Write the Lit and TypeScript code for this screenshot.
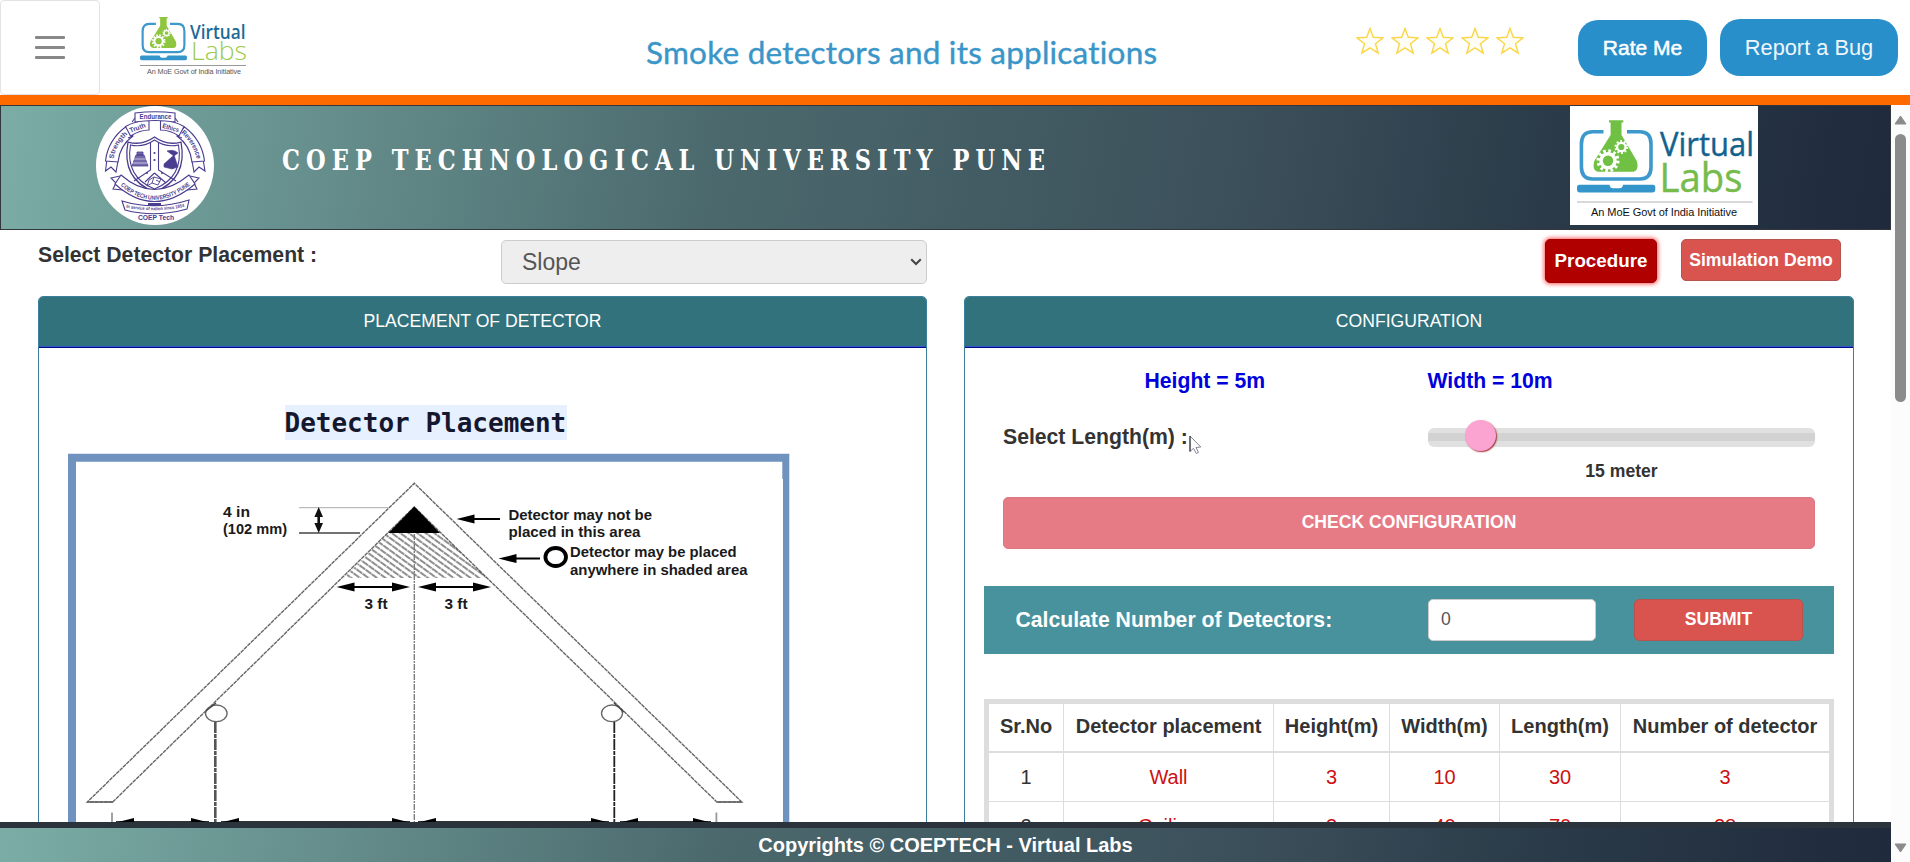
import { LitElement, html, css, svg } from "lit";
import { customElement, property } from "lit/decorators.js";

/** Toothed wheel outline centred on (cx, cy). */
const gear = (cx: number, cy: number, r: number, teeth: number, hole: string) => {
  const circ = 2 * Math.PI * r;
  const step = circ / (teeth * 2);
  return svg`
    <circle cx=${cx} cy=${cy} r=${r * 0.93} fill="none" stroke="#fff" stroke-width=${r * 0.36} stroke-dasharray=${`${step * 0.93} ${step * 0.93}`}></circle>
    <circle cx=${cx} cy=${cy} r=${r * 0.84} fill="#fff"></circle>
    <circle cx=${cx} cy=${cy} r=${r * 0.5} fill=${hole}></circle>`;
};

/** Laptop with a conical flask, shared by both logos. */
const laptop = (green: string) => svg`
  <path d="M33.500 25.800H22.500Q11.400 25.800 11.400 38V61Q11.400 73 22.500 73H70Q81 73 81 61V38Q81 25.800 70 25.800H57" fill="none" stroke="#3d98cb" stroke-width="3.600"></path>
  <path d="M9.500 78.700H39.500Q40 82.200 43 82.200H49.500Q52.500 82.200 53 78.700H83Q85.300 78.700 85.300 81.500V83.500Q85.300 86.500 82.500 86.500H10Q7 86.500 7 83.500V81.500Q7 78.700 9.500 78.700Z" fill="#3495cb"></path>
  <path d="M39 14.300H53.300V16.500H51.500V29L66.800 55Q69.500 65.800 62 65.800H29.500Q21.500 65.800 24.300 55L40.600 29V16.500H39Z" fill=${green}></path>
  ${gear(38, 54.7, 10.4, 12, green)}
  ${gear(51.3, 41, 6.2, 10, green)}`;

@customElement("lab-logo")
class LabLogo extends LitElement {
  @property() variant = "small";
  static styles = css`
    :host { display: block; }
    svg { display: block; }
    .small { font-family: "Open Sans", sans-serif; }
    .cap { font-family: "Liberation Sans", Arial, sans-serif; }
  `;
  render() {
    return this.variant === "small"
      ? html`<svg class="small" width="107" height="60" viewBox="0 0 107 60">
          <g transform="translate(-4.2 -8.6) scale(.6)">${laptop("#8fc63f")}</g>
          <text x="50" y="21.800" font-size="20" font-weight="600" fill="#1c6a97" textLength="55.500" lengthAdjust="spacingAndGlyphs">Virtual</text>
          <text x="51" y="43" font-size="25.500" font-weight="300" fill="#9bcb4b" textLength="56" lengthAdjust="spacingAndGlyphs">Labs</text>
          <path d="M0 48.500H106" stroke="#999" stroke-width="1"></path>
          <text class="cap" x="7" y="57" font-size="7.200" fill="#555" textLength="94">An MoE Govt of India Initiative</text>
        </svg>`
      : html`<svg class="small" width="188" height="119" viewBox="0 0 188 119">
          <rect width="188" height="119" fill="#fff"></rect>
          ${laptop("#70c044")}
          <text x="90" y="49.600" font-size="33" fill="#13628e" stroke="#13628e" stroke-width=".4" textLength="94" lengthAdjust="spacingAndGlyphs">Virtual</text>
          <text x="89.500" y="86" font-size="41" fill="#76bb4c" stroke="#76bb4c" stroke-width=".4" textLength="83" lengthAdjust="spacingAndGlyphs">Labs</text>
          <path d="M7 96H182.500" stroke="#ccc" stroke-width="1.500"></path>
          <text class="cap" x="21" y="109.700" font-size="11" fill="#111" textLength="146">An MoE Govt of India Initiative</text>
        </svg>`;
  }
}

@customElement("college-seal")
class CollegeSeal extends LitElement {
  static styles = css`
    :host { display: block; }
    svg { display: block; font-family: "Liberation Sans Narrow", "Liberation Sans", Arial, sans-serif; font-weight: bold; }
  `;
  render() {
    return html`<svg width="118" height="119" viewBox="0 0 118 119" fill="none" stroke="#4a3d8f" stroke-width="1.100">
      <ellipse cx="59" cy="59.500" rx="59" ry="59.500" fill="#fff" stroke="none"></ellipse>
      <defs>
        <path id="sl" d="M17.500 53Q20 37 34.500 26"></path>
        <path id="sr" d="M85 27Q97 37 101 54"></path>
        <path id="ut" d="M24.500 79.500Q58 108.500 95 78.500"></path>
        <path id="lt" d="M30 101.500Q58 107.500 90 100.500"></path>
      </defs>
      <path d="M11 53L9.500 65L15 61L20 66L22 55M107 53L109 65L103 61L98 66L96 55"></path>
      <path d="M9.500 55Q12 34 29.500 21L37 30Q24 39 22 56ZM108.500 55Q106 34 88.500 21L81 30Q94 39 96 56Z" fill="#fff"></path>
      <path d="M37 30L32 32M81 30L86 32M39 12L36 16M79 12L82 16"></path>
      <path d="M29.500 20.500Q40 14.500 53 14.500V24Q44 24 34.500 30ZM64.500 14.500Q78 14.500 88 20.500L83 30Q74 24 64.500 24Z" fill="#fff"></path>
      <path d="M39 7Q59 4.500 79 7V16Q59 13 39 16Z" fill="#fff"></path>
      <path d="M32 36Q46 40 58.500 31Q71 40 85 36Q92 73 58.500 86Q25 73 32 36Z" fill="#fff" stroke-width="1.300"></path>
      <path d="M34.500 39Q47 42 58.500 34Q70 42 82.500 39Q88 71 58.500 83Q29 71 34.500 39Z"></path>
      <path d="M54.500 37V64L38 75M62.500 37V64L80 75M58.500 67L49 76M58.500 67L70 77"></path>
      <path d="M40 49H48L52 60H36ZM41 49V46H47V49Z" fill="#7468aa" stroke-width=".8"></path>
      <path d="M37 53H51M36 57H52" stroke="#fff" stroke-width=".6"></path>
      <path d="M71 45Q78 43 82 47L78 50ZM68 58L78 49L82 61L76 63L68 61Z" fill="#4a3d8f" stroke-width=".6"></path>
      <path d="M53 74L58 71L65 73L62 79L56 77L51 80ZM58 71L56 77M60 74L64 76" stroke-width=".9"></path>
      <g fill="#4a3d8f" stroke="none"><circle cx="58.500" cy="47" r="1.100"></circle><circle cx="58.500" cy="54" r="1.100"></circle><circle cx="51" cy="67" r="1"></circle><circle cx="66" cy="67" r="1"></circle></g>
      <path d="M24 70L15 72L20 77L17 83L27 84M94 70L103 72L98 77L101 83L91 84"></path>
      <path d="M25 69Q58 98 93 69L99 78Q58 113 19 78Z" fill="#fff"></path>
      <path d="M26 95Q59 105 93 94L91 103Q59 112 29 104Z" fill="#fff"></path>
      <g fill="#4a3d8f" stroke="none">
        <text x="43.500" y="13" font-size="7" textLength="32" lengthAdjust="spacingAndGlyphs">Endurance</text>
        <text font-size="6.800" x="34.500" y="26.800" transform="rotate(-20 34.500 26.800)" textLength="16.500" lengthAdjust="spacingAndGlyphs">Truth</text>
        <text font-size="6.800" x="66" y="21.800" transform="rotate(16 66 21.800)" textLength="17" lengthAdjust="spacingAndGlyphs">Ethics</text>
        <text font-size="6.800"><textPath href="#sl" textLength="29" lengthAdjust="spacingAndGlyphs">Strength</textPath></text>
        <text font-size="6.800"><textPath href="#sr" textLength="31" lengthAdjust="spacingAndGlyphs">Reverence</textPath></text>
        <text font-size="6"><textPath href="#ut" textLength="77" lengthAdjust="spacingAndGlyphs">COEP TECH UNIVERSITY PUNE</textPath></text>
        <text font-size="4.600"><textPath href="#lt" textLength="59" lengthAdjust="spacingAndGlyphs">In service of nation since 1854</textPath></text>
        <rect x="52" y="97" width="13" height="3"></rect>
        <text x="42" y="114" font-size="6.800" textLength="36" lengthAdjust="spacingAndGlyphs">COEP Tech</text>
      </g>
    </svg>`;
  }
}

/** Horizontal arrow head with its tip at (x, y), pointing along dir. */
const head = (x: number, y: number, dir: number, len = 18, half = 4.5) =>
  svg`<path d=${`M${x} ${y}L${x + dir * len} ${y - half}V${y + half}Z`} fill="#000"></path>`;

@customElement("roof-diagram")
class RoofDiagram extends LitElement {
  static styles = css`
    :host { display: block; }
    svg { display: block; }
    .t { font-family: "Liberation Sans", Arial, sans-serif; font-weight: bold; font-size: 14.6px; fill: #1a1a1a; }
  `;
  render() {
    const label = (x: number, y: number, w: number, s: string) =>
      svg`<text class="t" x=${x} y=${y} textLength=${w} lengthAdjust="spacingAndGlyphs">${s}</text>`;
    const dims: [number, number][] = [[116, 209], [221, 410], [418, 609], [620, 711]];
    return html`<svg width="722" height="400" viewBox="68 453 722 400">
      <defs>
        <pattern id="h" width="7.600" height="5" patternUnits="userSpaceOnUse" patternTransform="rotate(36)">
          <path d="M0 1H7" stroke="#3a3a3a" stroke-width="1.150"></path>
        </pattern>
      </defs>
      <path d="M68 453.700H789.300V860H783V479H782.300V461.700H76V860H68Z" fill="#7092be"></path>
      <g stroke="#666" stroke-width="1.400" fill="none">
        <path d="M112.700 802H87.300L414.300 483.300L741.800 802H716.800" stroke-dasharray="4 .7"></path>
        <path d="M112.700 802L414.300 507L716.800 802" stroke-dasharray="4 .7"></path>
        <path d="M87 802H113M716.500 802H742" stroke-width="1.400"></path>
      </g>
      <path d="M389 532.500H440L487 578H344Z" fill="url(#h)"></path>
      <path d="M414.300 506.500L388.500 533H440Z" fill="#000"></path>
      <path d="M414.300 534V822" stroke="#777" stroke-width="1.300" stroke-dasharray="6 1 2 1"></path>
      <path d="M299 507.700H388" stroke="#aaa" stroke-width="1"></path>
      <path d="M299 533H360" stroke="#444" stroke-width="1.400"></path>
      <path d="M318.700 507L323 517H320V523H323L318.700 533L314.400 523H317.400V517H314.400Z" fill="#111"></path>
      <path d="M345 587H404M424 587H484M468 519H500M510 558.500H540" stroke="#000" stroke-width="1.900"></path>
      ${head(336.5, 587, 1)}${head(410, 587, -1)}${head(418, 587, 1)}${head(491, 587, -1)}
      ${head(456.5, 519, 1)}${head(498.5, 558.5, 1)}
      <ellipse cx="555.700" cy="557" rx="10.300" ry="9" fill="#fff" stroke="#000" stroke-width="3.800"></ellipse>
      ${label(223, 516.7, 27, "4 in")}
      ${label(223, 534, 64, "(102 mm)")}
      ${label(508.5, 520, 143.5, "Detector may not be")}
      ${label(508.5, 537, 132, "placed in this area")}
      ${label(570, 557.3, 166.5, "Detector may be placed")}
      ${label(570, 574.5, 177.5, "anywhere in shaded area")}
      ${label(364.5, 608.7, 23, "3 ft")}
      ${label(444.5, 608.7, 23, "3 ft")}
      <g fill="#fff" stroke="#666" stroke-width="1.300">
        <ellipse cx="216.300" cy="713.300" rx="10.800" ry="8.300"></ellipse>
        <ellipse cx="612" cy="713.300" rx="10.500" ry="8.300"></ellipse>
      </g>
      <path d="M206 711L216 703M614 703L624 712" stroke="#444" stroke-width="1.300"></path>
      <path d="M215.300 722V822" stroke="#555" stroke-width="2.600" stroke-dasharray="11 1 4 1"></path>
      <path d="M614.300 722V822" stroke="#222" stroke-width="1.800" stroke-dasharray="11 1 4 1"></path>
      <path d="M112 812.500V830M716.400 812.500V830" stroke="#999" stroke-width="1.800"></path>
      ${dims.map(([a, b]) => svg`<path d=${`M${a} 821.5H${b}`} stroke="#333" stroke-width="1.200"></path>${head(a, 822.5, 1)}${head(b, 822.5, -1)}`)}
    </svg>`;
  }
}

@customElement("app-root")
class AppRoot extends LitElement {
  static styles = css`
    * { box-sizing: border-box; }
    :host { display: flex; flex-direction: column; width: 1910px; height: 862px; overflow: hidden; background: #fff; font-family: "Liberation Sans", Arial, sans-serif; color: #333; line-height: 1; }
    .top { height: 105px; flex: none; border-bottom: 10px solid #ff6a00; display: flex; }
    .burger { width: 100px; height: 95px; border: 1px solid #e3e3e3; border-radius: 4px; display: flex; flex-direction: column; align-items: center; justify-content: center; gap: 7.5px; padding: 0; background: none; }
    .burger i { width: 30px; height: 2.500px; background: #888; border-radius: 1px; }
    .logo { margin: 17px 0 0 40px; width: 107px; }
    .title { margin: 34px 0 0 399px; width: 511px; font: 400 31.500px/36px Lato, sans-serif; color: #3a96c8; white-space: nowrap; letter-spacing: .22px; -webkit-text-stroke: .4px #3a96c8; }
    .stars { margin: 27px 0 0 199px; display: flex; gap: 7px; width: 168px; height: 28px; }
    .pill { background: #288fcb; color: #fff; border: 0; border-radius: 20px; font: 21px "Liberation Sans", Arial, sans-serif; padding: 0; height: 57px; margin-top: 19px; white-space: nowrap; }
    .rate { margin-left: 54px; width: 129px; height: 56px; margin-top: 20px; -webkit-text-stroke: .5px #fff; }
    .bug { margin-left: 13px; width: 178px; font-size: 21.800px; color: #eef7fc; }
    .body { flex: 1; min-height: 0; display: flex; }
    .page { width: 1891px; display: flex; flex-direction: column; }
    .banner, .foot { background: linear-gradient(100deg, #7bada6 0%, #4b696d 38%, #3b4f5a 66%, #2a3a48 82%, #1f2a3c 100%); flex: none; }
    .banner { height: 125px; border: 1px solid #33363a; display: flex; }
    .banner college-seal { margin-left: 95px; }
    .uni { margin: 36px 0 0 68px; width: 1288px; font: bold 28.500px/36px "DejaVu Serif Condensed", "DejaVu Serif", serif; font-stretch: condensed; color: #fff; letter-spacing: 6.850px; white-space: nowrap; transform: scaleX(.88); transform-origin: left; }
    .scroll { flex: 1; min-height: 0; overflow: hidden; padding-left: 38px; }
    .tools { display: flex; height: 66px; }
    .lbl { font-weight: bold; font-size: 21.200px; white-space: nowrap; }
    .tools .lbl { width: 463px; padding-top: 14px; }
    .select { width: 426px; height: 44px; margin-top: 10px; border: 1px solid #ccc; border-radius: 5px; background: #eee; color: #555; font-size: 23px; padding: 0 4px 0 20px; display: flex; align-items: center; justify-content: space-between; }
    .btn { border: 1px solid #b5534f; border-radius: 5px; background: #d9534f; color: #fff; font: bold 17.600px "Liberation Sans", Arial, sans-serif; padding: 0 0 2px; white-space: nowrap; }
    .proc { margin: 9px 0 0 618px; width: 112px; height: 44px; padding-bottom: 0; background: #b00000; border-color: #a00000; font-size: 18.800px; box-shadow: 0 0 4px 1px rgba(255, 30, 30, .75); }
    .demo { margin: 9px 0 0 24px; width: 160px; height: 42px; padding-bottom: 0; }
    .panels { display: flex; gap: 37px; }
    .panel { border: 1px solid #3a7f9c; border-radius: 5px 5px 0 0; width: 889px; height: 700px; }
    .conf { width: 890px; }
    .head { height: 51px; background: #31727c; border-bottom: 1px solid #000c8c; box-shadow: inset 0 -1px 0 #3057c8; color: #fff; font-size: 17.600px; text-align: center; padding-top: 15.500px; border-radius: 4px 4px 0 0; }
    .caption { margin: 57px 0 13px 245.500px; width: 282px; height: 35px; background: #e7f0fe; color: #14172e; font: bold 26px/36px "DejaVu Sans Mono", monospace; white-space: nowrap; }
    roof-diagram { margin-left: 29px; }
    .conf .inner { padding: 0 19px; display: flex; flex-direction: column; }
    .dims { display: flex; color: #0000da; padding: 22px 0 0 160.500px; height: 78px; }
    .dims .lbl { width: 283px; }
    .len { display: flex; padding-left: 19px; height: 71px; }
    .len .lbl { width: 425px; position: relative; }
    .cursor { position: absolute; left: 186px; top: 9px; }
    .track { width: 387px; height: 19px; border-radius: 6px; background: linear-gradient(#e0e0e0 5px, #d2d2d2 5px 13px, #e0e0e0 13px); position: relative; margin-top: 2px; }
    .knob { position: absolute; left: 36.500px; top: -8px; width: 31px; height: 31px; border-radius: 50%; background: #fba4d1; box-shadow: 1px 1px 1.500px #a03038; }
    .val { text-align: center; font-weight: bold; font-size: 17.600px; padding-top: 16px; }
    .check { margin-left: 19px; width: 812px; height: 52px; background: #e77b85; border-color: #dd7882; }
    .calc { margin-top: 37px; width: 850px; height: 68px; background: #48929e; color: #fff; display: flex; align-items: center; padding-left: 31.500px; }
    .calc .lbl { width: 412.500px; }
    .num { width: 168px; height: 42px; background: #fff; border: 1px solid #ccc; border-radius: 5px; color: #555; font-size: 17.600px; padding: 10.500px 12px; }
    .submit { margin-left: 38px; width: 169px; height: 42px; }
    .grid { margin-top: 45px; width: 850px; border: 5px solid #ddd; font-size: 20px; background: #ddd; display: grid; grid-template-columns: 74px 209px 115px 109px 120px 208px; column-gap: 1px; }
    .grid div { background: #fff; text-align: center; height: 48px; padding-top: 14px; margin-bottom: 1px; color: #cc1111; white-space: nowrap; }
    .grid .h { font-weight: bold; color: #333; height: 47px; margin-bottom: 2px; padding-top: 12px; }
    .grid .n { color: #333; }
    .foot { height: 40px; border-top: 6px solid #2b343d; color: #fff; font-weight: bold; font-size: 20px; text-align: center; padding-top: 7px; }
    .bar { width: 19px; background: #fcfcfc; display: flex; flex-direction: column; align-items: center; padding: 10px 0 9px; }
    .thumb { width: 11px; height: 268px; border-radius: 6px; background: #8b8b8b; margin: 9px 0 auto; }
    svg { display: block; }
  `;

  render() {
    const heads = ["Sr.No", "Detector placement", "Height(m)", "Width(m)", "Length(m)", "Number of detector"];
    const rows = [
      ["1", "Wall", "3", "10", "30", "3"],
      ["2", "Ceiling", "3", "40", "70", "28"],
    ];
    return html`
      <header class="top">
        <button class="burger" aria-label="Menu"><i></i><i></i><i></i></button>
        <lab-logo class="logo" variant="small"></lab-logo>
        <div class="title">Smoke detectors and its applications</div>
        <div class="stars">
          ${[0, 1, 2, 3, 4].map(() => html`<svg width="28" height="28" viewBox="0 0 28 28"><path d="M14 1.500L17.300 10.300L27 10.800L19.500 16.700L22.200 26.200L14 20.800L5.800 26.200L8.500 16.700L1 10.800L10.700 10.300Z" fill="#fffef6" stroke="#fad646" stroke-width="1.400"></path></svg>`)}
        </div>
        <button class="pill rate">Rate Me</button>
        <button class="pill bug">Report a Bug</button>
      </header>
      <div class="body">
        <div class="page">
          <div class="banner">
            <college-seal></college-seal>
            <div class="uni">COEP TECHNOLOGICAL UNIVERSITY PUNE</div>
            <lab-logo variant="large"></lab-logo>
          </div>
          <div class="scroll">
            <div class="tools">
              <div class="lbl">Select Detector Placement :</div>
              <div class="select">Slope<svg width="12" height="8" viewBox="0 0 12 8"><path d="M1.200 1.200L6 6L10.800 1.200" fill="none" stroke="#444" stroke-width="2"></path></svg></div>
              <button class="btn proc">Procedure</button>
              <button class="btn demo">Simulation Demo</button>
            </div>
            <div class="panels">
              <section class="panel">
                <div class="head">PLACEMENT OF DETECTOR</div>
                <div class="caption">Detector Placement</div>
                <roof-diagram></roof-diagram>
              </section>
              <section class="panel conf">
                <div class="head">CONFIGURATION</div>
                <div class="inner">
                  <div class="dims"><div class="lbl">Height = 5m</div><div class="lbl">Width = 10m</div></div>
                  <div class="len">
                    <div class="lbl">Select Length(m) :<svg class="cursor" width="14" height="20" viewBox="0 0 14 20"><path d="M1 1V16.500L4.500 13.300L7.300 18.500L9.500 17.400L7 12.500L11.800 12Z" fill="#fff" stroke="#778" stroke-width=".9"></path><path d="M1 1V16.500" stroke="#223" stroke-width="1"></path></svg></div>
                    <div>
                      <div class="track"><div class="knob"></div></div>
                      <div class="val">15 meter</div>
                    </div>
                  </div>
                  <button class="btn check">CHECK CONFIGURATION</button>
                  <div class="calc">
                    <div class="lbl">Calculate Number of Detectors:</div>
                    <div class="num">0</div>
                    <button class="btn submit">SUBMIT</button>
                  </div>
                  <div class="grid">
                    ${heads.map((h) => html`<div class="h">${h}</div>`)}
                    ${rows.map((r) => r.map((c, i) => html`<div class=${i ? "" : "n"}>${c}</div>`))}
                  </div>
                </div>
              </section>
            </div>
          </div>
          <footer class="foot">Copyrights © COEPTECH - Virtual Labs</footer>
        </div>
        <div class="bar">
          <svg width="13" height="10" viewBox="0 0 13 10"><path d="M6.500 1L12 9H1Z" fill="#8b8b8b" stroke="#8b8b8b" stroke-linejoin="round"></path></svg>
          <div class="thumb"></div>
          <svg width="13" height="10" viewBox="0 0 13 10"><path d="M6.500 9L12 1H1Z" fill="#8b8b8b" stroke="#8b8b8b" stroke-linejoin="round"></path></svg>
        </div>
      </div>`;
  }
}
